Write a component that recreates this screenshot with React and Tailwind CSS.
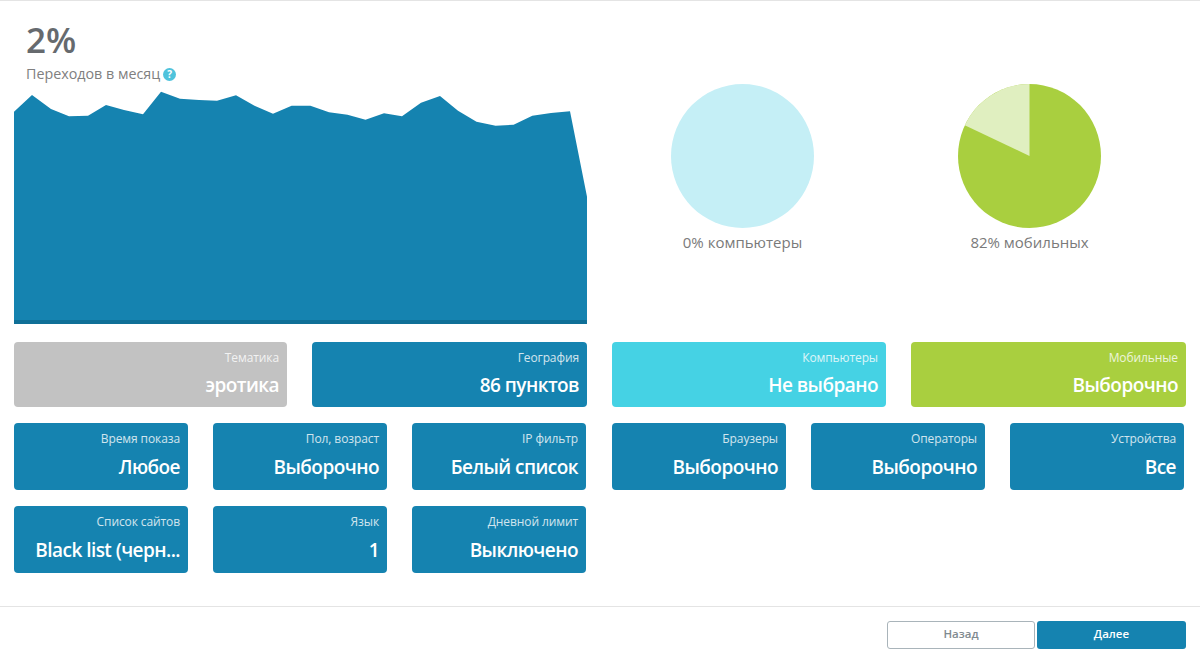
const chartPoints =
  "14,324 14,111.7 32,95 51,109 69,116.3 88,115.7 106,105 124,110 143,114.3 161,91.7 180,98.7 199,100 217,100.7 236,95.3 254.5,105.7 273,113.7 291.6,105.7 310.4,105.7 329,112.3 347.5,114.7 365.5,119.7 384,113.3 402,116.3 421,102.7 440,96 458,110.7 476.5,121.7 495.6,125.7 513.6,124.7 532.3,115.7 551,113 570,111.3 587,196.7 587,324";

const bigTilesLeft = [
  { label: "Тематика", value: "эротика", color: "bg-[#c2c2c2]" },
  { label: "География", value: "86 пунктов", color: "bg-[#1583b0]" },
];

const bigTilesRight = [
  { label: "Компьютеры", value: "Не выбрано", color: "bg-[#45d2e4]" },
  { label: "Мобильные", value: "Выборочно", color: "bg-[#a9cf3f]" },
];

const smallTilesLeft = [
  { label: "Время показа", value: "Любое" },
  { label: "Пол, возраст", value: "Выборочно" },
  { label: "IP фильтр", value: "Белый список" },
  { label: "Список сайтов", value: "Black list (черн..." },
  { label: "Язык", value: "1" },
  { label: "Дневной лимит", value: "Выключено" },
];

const smallTilesRight = [
  { label: "Браузеры", value: "Выборочно" },
  { label: "Операторы", value: "Выборочно" },
  { label: "Устройства", value: "Все" },
];

function Tile({ label, value, color = "bg-[#1583b0]", height = "h-[67px]", gap = "mt-[8px]" }) {
  return (
    <div className={`${color} ${height} rounded-[4px] pl-4 pr-[8px] pt-[8px] text-right text-white`}>
      <div className="text-[12px] leading-[15px] tracking-[-0.1px] opacity-80">{label}</div>
      <div className={`${gap} whitespace-nowrap text-[19px] font-semibold leading-[26px] tracking-[-0.55px]`}>{value}</div>
    </div>
  );
}

function Pie({ color, label, children }) {
  return (
    <div className="flex w-[143px] flex-col items-center">
      <svg width="143" height="144" viewBox="0 0 144 144" preserveAspectRatio="none">
        <circle cx="72" cy="72" r="72" fill={color} />
        {children}
      </svg>
      <div className="mt-[4px] whitespace-nowrap text-[15px] leading-[20px] text-[#7a7a7a]">{label}</div>
    </div>
  );
}

export default function App() {
  return (
    <div className="flex h-[656px] w-[1200px] flex-col overflow-hidden border-t border-[#e4e4e4] bg-white font-['Open_Sans',sans-serif]">
      <div className="grid flex-1 grid-cols-[573px_574px] gap-x-[25px] px-[14px]">
        <div>
          <div className="pl-3 pt-[19px]">
            <div className="text-[35px] font-semibold leading-[40px] text-[#666a6e]">2%</div>
            <div className="mt-[4px] flex h-[20px] items-center gap-[3px] text-[14.3px] text-[#808080]">
              Переходов в месяц
              <span className="flex h-[13px] w-[13px] items-center justify-center rounded-full bg-[#4fc3dc] text-[10px] font-bold leading-none text-white">
                ?
              </span>
            </div>
          </div>
          <svg className="mt-[7px] block" width="573" height="233" viewBox="14 91 573 233">
            <polygon points={chartPoints} fill="#1583b0" />
            <rect x="14" y="320" width="573" height="4" fill="#0f6f97" />
          </svg>
        </div>

        <div className="flex gap-[144px] pl-[59px] pt-[83px]">
          <Pie color="#c5eff6" label="0% компьютеры" />
          <Pie color="#a9cf3f" label="82% мобильных">
            <path d="M72 72 L72 0 A72 72 0 0 0 6.8 41.3 Z" fill="#e0efc0" />
          </Pie>
        </div>

        <div className="mt-[18px] flex flex-col gap-4 pb-[33px]">
          <div className="grid grid-cols-[273px_275px] gap-x-[25px]">
            {bigTilesLeft.map((t) => (
              <Tile key={t.label} {...t} height="h-[65px]" gap="mt-[7px]" />
            ))}
          </div>
          <div className="grid grid-cols-[174px_174px_174px] gap-x-[25px] gap-y-4">
            {smallTilesLeft.map((t) => (
              <Tile key={t.label} {...t} />
            ))}
          </div>
        </div>

        <div className="mt-[18px] flex flex-col gap-4">
          <div className="grid grid-cols-[274px_275px] gap-x-[25px]">
            {bigTilesRight.map((t) => (
              <Tile key={t.label} {...t} height="h-[65px]" gap="mt-[7px]" />
            ))}
          </div>
          <div className="grid grid-cols-[174px_174px_174px] gap-x-[25px] gap-y-4">
            {smallTilesRight.map((t) => (
              <Tile key={t.label} {...t} />
            ))}
          </div>
        </div>
      </div>

      <div className="flex h-[50px] items-start justify-end gap-[2px] border-t border-[#e4e4e4] pr-[14px] pt-[14px]">
        <button className="h-[28px] w-[148px] rounded-[3px] border border-[#a9b4ba] bg-white pb-[2px] text-[11.5px] font-semibold text-[#7f8a90]">
          Назад
        </button>
        <button className="h-[28px] w-[149px] rounded-[3px] bg-[#1583b0] pb-[2px] text-[11.5px] font-semibold text-white">
          Далее
        </button>
      </div>
    </div>
  );
}
